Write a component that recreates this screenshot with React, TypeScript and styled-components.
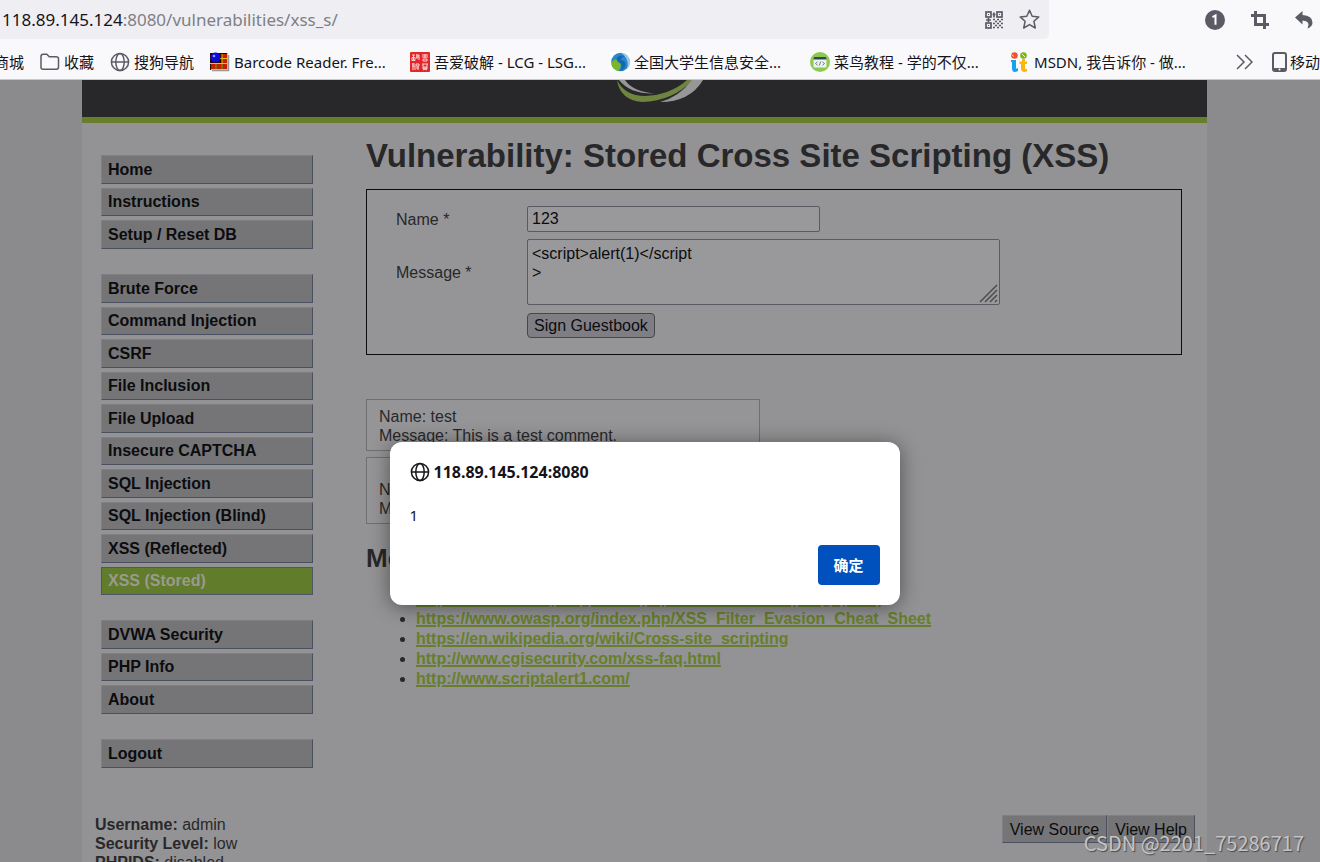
import React from "react";
import styled, { createGlobalStyle } from "styled-components";

const uiFont = `"Noto Sans", "Noto Sans CJK SC", sans-serif`;
const pageFont = `"Liberation Sans", Arial, sans-serif`;

const GlobalStyle = createGlobalStyle`
  *, *::before, *::after { box-sizing: border-box; }
  body { margin: 0; background: #8b8b8d; }
  button, input, textarea { font: inherit; }
`;

const Browser = styled.div`
  position: relative;
  display: flex;
  flex-direction: column;
  height: 100vh;
  overflow: hidden;
  font-family: ${uiFont};
`;

const Toolbar = styled.header`
  display: flex;
  align-items: center;
  flex: none;
  height: 39px;
  background: #f9f9fb;
`;

const AddressBar = styled.div`
  display: flex;
  align-items: center;
  flex: 1;
  gap: 16px;
  height: 39px;
  padding: 0 9px 0 2px;
  border-radius: 0 0 5px 0;
  background: #efeef3;
`;

const Address = styled.div`
  flex: 1;
  font-size: 17px;
  line-height: 24px;
  color: #7f7f85;
  white-space: nowrap;
`;

const Host = styled.span`
  color: #15141a;
`;

const IconButton = styled.button`
  display: flex;
  flex: none;
  padding: 0;
  border: 0;
  background: none;
  color: #5b5b66;
`;

const ToolbarActions = styled.div`
  display: flex;
  align-items: center;
  gap: 25px;
  padding: 0 7px 0 156px;
`;

const Bookmarks = styled.nav`
  display: flex;
  align-items: center;
  flex: none;
  gap: 16px;
  height: 41px;
  padding-top: 5px;
  border-bottom: 1px solid #c9c9cb;
  background: #f9f9fb;
  overflow: hidden;
`;

const Bookmark = styled.a<{ $wide?: boolean; $cut?: boolean }>`
  display: flex;
  align-items: center;
  justify-content: ${(p) => (p.$cut ? "flex-end" : "flex-start")};
  flex: none;
  gap: 4px;
  width: ${(p) => (p.$wide ? "184px" : p.$cut ? "24px" : "auto")};
  overflow: hidden;
  font-size: 15px;
  line-height: 24px;
  color: #15141a;
  text-decoration: none;
  white-space: nowrap;
`;

const BookmarkEnd = styled.div`
  display: flex;
  align-items: center;
  flex: none;
  gap: 18px;
  margin-left: auto;
  width: 84px;
  overflow: hidden;
`;

const MobileLink = styled(Bookmark)`
  gap: 1px;
`;

const Site = styled.div`
  flex: 1;
  min-height: 0;
  padding: 0 113px 0 82px;
  overflow: hidden;
  background: #8b8b8d;
  font-family: ${pageFont};
  font-size: 16px;
  line-height: 19px;
  color: #28282a;
`;

const Container = styled.div`
  min-height: 100%;
  background: #939395;
`;

const Banner = styled.div`
  display: flex;
  justify-content: center;
  height: 43px;
  padding-left: 32px;
  border-bottom: 6px solid #677f2a;
  background: #28282a;
`;

const Columns = styled.div`
  display: grid;
  grid-template-columns: 212px minmax(0, 1fr);
  gap: 53px;
  padding: 0 25px 0 19px;
`;

const Menu = styled.nav`
  display: flex;
  flex-direction: column;
  gap: 25px;
  padding-top: 32px;
`;

const MenuGroup = styled.ul<{ $height: number }>`
  display: grid;
  grid-auto-rows: 1fr;
  gap: 4px;
  min-height: ${(p) => p.$height}px;
  margin: 0;
  padding: 0;
  list-style: none;
`;

const MenuLink = styled.a<{ $active: boolean }>`
  display: flex;
  align-items: center;
  height: 100%;
  padding: 0 6px;
  border: 1px solid;
  border-color: ${(p) => (p.$active ? "#4d5668" : "#808082 #4b5061 #4b5061 #808082")};
  background: ${(p) => (p.$active ? "#617c2b" : "#757577")};
  color: ${(p) => (p.$active ? "#9a9a8e" : "#0c0c0e")};
  font-weight: bold;
  text-decoration: none;
`;

const Main = styled.main`
  padding-top: 13px;
`;

const Title = styled.h1`
  margin: 0 0 13px;
  font-size: 33px;
  line-height: 40px;
  white-space: nowrap;
`;

const GuestForm = styled.form`
  display: grid;
  grid-template-columns: 131px minmax(0, 1fr);
  align-items: center;
  justify-items: start;
  gap: 7px 0;
  padding: 16px 28px 16px 29px;
  border: 1px solid #0c0c0e;
  background: #959597;
`;

const TextInput = styled.input`
  width: 293px;
  height: 26px;
  padding: 0 4px;
  border: 1px solid #5b5a63;
  border-radius: 2px;
  background: #99999b;
  color: #0c0c0e;
`;

const AreaWrap = styled.div`
  position: relative;
  width: 473px;
  height: 66px;
`;

const TextArea = styled.textarea`
  display: block;
  width: 100%;
  height: 100%;
  padding: 4px;
  border: 1px solid #5b5a63;
  border-radius: 2px;
  background: #99999b;
  color: #0c0c0e;
  line-height: 19px;
  resize: none;
`;

const Grip = styled.svg`
  position: absolute;
  right: 2px;
  bottom: 2px;
`;

const SubmitButton = styled.button`
  grid-column: 2;
  height: 25px;
  margin-top: 1px;
  padding: 0 6px;
  border: 1px solid #47464f;
  border-radius: 4px;
  background: #7f7e85;
  color: #0c0c0e;
  line-height: 19px;
`;

const Comments = styled.section`
  display: grid;
  gap: 6px;
  width: 394px;
  margin-top: 44px;
`;

const Comment = styled.article<{ $spaced?: boolean }>`
  padding: ${(p) => (p.$spaced ? "22px 12px 5px" : "7px 12px 5px")};
  border: 1px solid #6f6f71;
  background: #959597;
`;

const SubTitle = styled.h2`
  margin: 19px 0 15px;
  font-size: 26px;
  line-height: 31px;
`;

const Links = styled.ul`
  margin: 0;
  padding-left: 50px;
  line-height: 20px;
`;

const MoreLink = styled.a`
  color: #677f2a;
  font-weight: bold;
  text-decoration: underline;
  text-decoration-thickness: 2px;
`;

const SystemRow = styled.div`
  display: flex;
  align-items: flex-start;
  justify-content: space-between;
  padding: 47px 12px 0 13px;
`;

const Buttons = styled.div`
  display: flex;
`;

const ViewButton = styled.button`
  height: 28px;
  padding: 0 7px;
  border: 1px solid;
  border-color: #808082 #4b5061 #4b5061 #808082;
  background: #757577;
  color: #0c0c0e;
`;

const DialogLayer = styled.div`
  position: absolute;
  inset: 442px 31px auto 0;
  display: flex;
  justify-content: center;
`;

const Dialog = styled.div`
  display: flex;
  flex-direction: column;
  width: 510px;
  padding: 18px 20px 20px;
  border-radius: 12px;
  background: #fff;
  box-shadow: 0 2px 20px rgba(0, 0, 0, 0.45);
  font-size: 15px;
  line-height: 24px;
  color: #15141a;
`;

const DialogTitle = styled.div`
  display: flex;
  align-items: center;
  gap: 4px;
  margin-bottom: 19px;
  font-size: 16px;
  font-weight: bold;
`;

const DialogText = styled.div`
  margin-bottom: 18px;
`;

const ConfirmButton = styled.button`
  align-self: flex-end;
  width: 62px;
  height: 40px;
  padding: 0;
  border: 0;
  border-radius: 4px;
  background: #0050bd;
  color: #fff;
  font-weight: bold;
`;

const Watermark = styled.div`
  position: absolute;
  right: 16px;
  bottom: 6px;
  font-family: "Noto Sans CJK SC", sans-serif;
  font-size: 20px;
  line-height: 26px;
  color: #c4c4c6;
  text-shadow: 1px 1px 1px #4a4a4c;
`;

const Globe = ({ color }: { color: string }) => (
  <svg width="20" height="20" viewBox="0 0 20 20" fill="none" stroke={color} strokeWidth="1.5">
    <circle cx="10" cy="10" r="8.6" />
    <ellipse cx="10" cy="10" rx="4.2" ry="8.6" />
    <path d="M1.5 10h17" />
  </svg>
);

const FolderIcon = () => (
  <svg width="20" height="20" viewBox="0 0 20 20" fill="none" stroke="#5b5b66" strokeWidth="1.5">
    <path d="M1 15.5V4.5Q1 2.2 3.2 2.2H6.8L9.3 4.7H16Q18.500 4.7 18.500 6.8V15Q18.500 17.2 16.500 17.2H3Q1 17.2 1 15.5Z" />
  </svg>
);

const BarcodeIcon = () => (
  <svg width="20" height="20" viewBox="0 0 20 20">
    <path d="M2 18.500H18.500V3" fill="none" stroke="#999" strokeWidth="1.500" />
    <rect x="0" y="1" width="18" height="17" fill="#2a0a00" />
    <path d="M1 12h4v5H1zM7 12h4v5H7zM13 12h4v5h-4zM12 7h5v4h-5zM12 2h5v4h-5z" fill="#c81e00" />
    <path d="M0 11.500h18M6 12v6M12 2v16M10 6.500h8M1 17.500h17M17.500 1v17" stroke="#e8c800" strokeWidth="1" />
    <circle cx="5.500" cy="5.500" r="5" fill="#0b0be0" />
    <circle cx="4" cy="4" r="1.300" fill="#8fa0ff" />
  </svg>
);

const SealIcon = () => (
  <svg width="20" height="20" viewBox="0 0 20 20" fill="none">
    <rect width="20" height="20" rx="1" fill="#e3262b" />
    <g stroke="#fbd5d5" strokeWidth="1">
      <path d="M2 3h3M3.500 3v5M2 5.500h3v3H2zM6 3h3v5M7 2v5M6 5h3" />
      <path d="M12 3h6M15 2v4M12 5h6M13 7h4v2h-4z" />
      <path d="M2 12h3M3 11v7M2 14h3v4M6 12h3v2H6zM6 16h3M8 14v4" />
      <path d="M12 12h6M13 12v3h4v-3M12 16h6M13 18l4-2M13 16l4 2" />
    </g>
  </svg>
);

const SecurityIcon = () => (
  <svg width="20" height="20" viewBox="0 0 20 20">
    <rect width="20" height="20" fill="#fff" />
    <circle cx="10.500" cy="10" r="9.300" fill="#2f86c8" />
    <path d="M11 .7A9.300 9.300 0 0 1 17 16.800Q20 7 11 .7Z" fill="#9ccbea" />
    <path d="M15 4Q8 2 6.500 7 6 9.500 10 11 13 13 10 19 16.500 16 15.500 11.500 15 8.500 11 8 11 5.500 15 4Z" fill="#1268b3" />
    <path d="M1.500 13Q2 7.500 6.500 7.500 7 10 10 11.200 12 13.500 8.500 19 3 18 1.500 13Z" fill="#79b82a" />
  </svg>
);

const CodeIcon = () => (
  <svg width="20" height="20" viewBox="0 0 20 20">
    <circle cx="10" cy="10" r="10" fill="#8cc94f" />
    <rect x="3.500" y="5" width="13" height="10.500" rx="1" fill="#eef2f0" />
    <path d="M3.500 7.500V6q0-1 1-1h11q1 0 1 1v1.500z" fill="#2d4a5a" />
    <path d="M7.500 9.800 5.500 11.500l2 1.700M12.500 9.800l2 1.700-2 1.700M10.800 9.500l-1.600 4" fill="none" stroke="#5c6d75" strokeWidth=".9" />
  </svg>
);

const MsdnIcon = () => (
  <svg width="20" height="20" viewBox="0 0 20 20">
    <circle cx="4.500" cy="3.500" r="3.300" fill="#f1512b" />
    <circle cx="13.500" cy="3.500" r="3.300" fill="#7fb80c" />
    <path d="M1 8h5v8q0 1 2 0v3q-6 3-6-3V10H1z" fill="#12a4ee" />
    <path d="M12 7h3v2.500h2V12h-2v4.500q0 1 2 .5v2.500Q11 21 11 16.500V12H9.500V9.500H12z" fill="#fbb50c" />
    <path d="M1.500 2.500 4 4.500M12 2l3 3" stroke="#fff" strokeWidth=".8" />
  </svg>
);

const QrIcon = () => (
  <svg width="18" height="18" viewBox="0 0 18 18" fill="none" stroke="currentColor" strokeWidth="1.700">
    <rect x="1" y="1" width="5" height="5" />
    <rect x="12" y="1" width="5" height="5" />
    <rect x="1" y="12" width="5" height="5" />
    <path d="M3 3.500h1M14 3.500h1M3 14.500h1" strokeWidth="1" />
    <path d="M7.500 3.500h3M9 1.500v5M3.500 7v4M1 9h5M8 8.500h2M12 8.500h2M16 8.500h2M10 10.500h2M14 10.500h2M8 12.500h2M12 12.500h2M16 12.500h2M10 14.500h2M14 14.500h2M8 16.500h2M12 16.500h2M16 16.500h2" />
  </svg>
);

const StarIcon = () => (
  <svg width="21" height="21" viewBox="0 0 21 21" fill="none" stroke="currentColor" strokeWidth="1.500" strokeLinejoin="round">
    <path d="M10.500 1.200 13.200 7.200 19.800 7.900 14.900 12.300 16.300 19 10.500 15.600 4.700 19 6.100 12.300 1.200 7.900 7.800 7.200Z" />
  </svg>
);

const OneIcon = () => (
  <svg width="20" height="20" viewBox="0 0 20 20">
    <circle cx="10" cy="10" r="10" fill="currentColor" />
    <path d="M7.500 7.200 10.500 5.500V14.800" fill="none" stroke="#fff" strokeWidth="2" />
  </svg>
);

const CropIcon = () => (
  <svg width="20" height="20" viewBox="0 0 20 20" fill="none" stroke="currentColor" strokeWidth="3">
    <path d="M5.500 1v13.500H19M1 5.500h13.500V19" />
  </svg>
);

const UndoIcon = () => (
  <svg width="18" height="18" viewBox="0 0 18 18" fill="currentColor">
    <path d="M0 6.500 7.500 0v4Q17.500 4.500 17.500 11.500 17.500 15.500 12.500 17.500 16 10 7.500 9.500V13.500Z" />
  </svg>
);

const PhoneIcon = () => (
  <svg width="18" height="20" viewBox="0 0 18 20">
    <rect x="2" y="1" width="13" height="18" rx="2" fill="none" stroke="#5b5b66" strokeWidth="2" />
    <path d="M2 16h13v3H2z" fill="#5b5b66" />
    <circle cx="8.500" cy="17.500" r="1" fill="#f9f9fb" />
  </svg>
);

const Chevrons = () => (
  <svg width="17" height="16" viewBox="0 0 17 16" fill="none" stroke="#5b5b66" strokeWidth="1.500">
    <path d="M1 1l7 7-7 7M9 1l7 7-7 7" />
  </svg>
);

const LogoSwoosh = () => (
  <svg width="92" height="24" viewBox="0 0 92 24">
    <path d="M4 0H10Q17 11 39 13.500 15 14 4 0Z" fill="#979799" />
    <path d="M2 0Q10 16 30 16 55 15 72 0H78Q58 21 27 22 5 20 2 0Z" fill="#6f8440" />
    <path d="M88 0Q75 22 45 22 64 17 77 0Z" fill="#979799" />
  </svg>
);

const menuGroups = [
  { height: 94, items: ["Home", "Instructions", "Setup / Reset DB"] },
  {
    height: 321,
    items: [
      "Brute Force",
      "Command Injection",
      "CSRF",
      "File Inclusion",
      "File Upload",
      "Insecure CAPTCHA",
      "SQL Injection",
      "SQL Injection (Blind)",
      "XSS (Reflected)",
      "XSS (Stored)",
    ],
  },
  { height: 94, items: ["DVWA Security", "PHP Info", "About"] },
  { height: 29, items: ["Logout"] },
];

const bookmarks = [
  { label: "收藏", icon: <FolderIcon />, wide: false },
  { label: "搜狗导航", icon: <Globe color="#5b5b66" />, wide: false },
  { label: "Barcode Reader. Fre...", icon: <BarcodeIcon />, wide: true },
  { label: "吾爱破解 - LCG - LSG...", icon: <SealIcon />, wide: true },
  { label: "全国大学生信息安全...", icon: <SecurityIcon />, wide: true },
  { label: "菜鸟教程 - 学的不仅...", icon: <CodeIcon />, wide: true },
  { label: "MSDN, 我告诉你 - 做...", icon: <MsdnIcon />, wide: true },
];

const links = [
  "https://www.owasp.org/index.php/Cross-site_Scripting_(XSS)",
  "https://www.owasp.org/index.php/XSS_Filter_Evasion_Cheat_Sheet",
  "https://en.wikipedia.org/wiki/Cross-site_scripting",
  "http://www.cgisecurity.com/xss-faq.html",
  "http://www.scriptalert1.com/",
];

export default function App() {
  return (
    <Browser>
      <GlobalStyle />
      <Toolbar>
        <AddressBar>
          <Address>
            <Host>118.89.145.124</Host>:8080/vulnerabilities/xss_s/
          </Address>
          <IconButton aria-label="QR code"><QrIcon /></IconButton>
          <IconButton aria-label="Bookmark this page"><StarIcon /></IconButton>
        </AddressBar>
        <ToolbarActions>
          <IconButton aria-label="Notifications"><OneIcon /></IconButton>
          <IconButton aria-label="Screenshot"><CropIcon /></IconButton>
          <IconButton aria-label="Undo"><UndoIcon /></IconButton>
        </ToolbarActions>
      </Toolbar>
      <Bookmarks>
        <Bookmark href="#" $cut>商城</Bookmark>
        {bookmarks.map((b) => (
          <Bookmark key={b.label} href="#" $wide={b.wide}>
            {b.icon}
            <span>{b.label}</span>
          </Bookmark>
        ))}
        <BookmarkEnd>
          <IconButton aria-label="More bookmarks"><Chevrons /></IconButton>
          <MobileLink href="#"><PhoneIcon />移动</MobileLink>
        </BookmarkEnd>
      </Bookmarks>

      <Site>
        <Container>
          <Banner><LogoSwoosh /></Banner>
          <Columns>
            <Menu>
              {menuGroups.map((group) => (
                <MenuGroup key={group.items[0]} $height={group.height}>
                  {group.items.map((item) => (
                    <li key={item}>
                      <MenuLink href="#" $active={item === "XSS (Stored)"}>{item}</MenuLink>
                    </li>
                  ))}
                </MenuGroup>
              ))}
            </Menu>
            <Main>
              <Title>Vulnerability: Stored Cross Site Scripting (XSS)</Title>
              <GuestForm onSubmit={(e) => e.preventDefault()}>
                <label htmlFor="name">Name *</label>
                <TextInput id="name" defaultValue="123" />
                <label htmlFor="message">Message *</label>
                <AreaWrap>
                  <TextArea id="message" defaultValue={"<script>alert(1)</script\n>"} />
                  <Grip width="19" height="19" viewBox="0 0 19 19" stroke="#4c4c4e" strokeWidth="1.500">
                    <path d="M1 18 18 1M6 18 18 6M11 18l7-7M16 18l2-2" />
                  </Grip>
                </AreaWrap>
                <SubmitButton type="submit">Sign Guestbook</SubmitButton>
              </GuestForm>
              <Comments>
                <Comment>
                  <div>Name: test</div>
                  <div>Message: This is a test comment.</div>
                </Comment>
                <Comment $spaced>
                  <div>Name: 123</div>
                  <div>Message:</div>
                </Comment>
              </Comments>
              <SubTitle>More Information</SubTitle>
              <Links>
                {links.map((url) => (
                  <li key={url}><MoreLink href={url}>{url}</MoreLink></li>
                ))}
              </Links>
            </Main>
          </Columns>
          <SystemRow>
            <div>
              <div><b>Username:</b> admin</div>
              <div><b>Security Level:</b> low</div>
              <div><b>PHPIDS:</b> disabled</div>
            </div>
            <Buttons>
              <ViewButton>View Source</ViewButton>
              <ViewButton>View Help</ViewButton>
            </Buttons>
          </SystemRow>
        </Container>
      </Site>

      <DialogLayer>
        <Dialog role="alertdialog" aria-labelledby="origin">
          <DialogTitle id="origin"><Globe color="#15141a" />118.89.145.124:8080</DialogTitle>
          <DialogText>1</DialogText>
          <ConfirmButton>确定</ConfirmButton>
        </Dialog>
      </DialogLayer>
      <Watermark>CSDN @2201_75286717</Watermark>
    </Browser>
  );
}
